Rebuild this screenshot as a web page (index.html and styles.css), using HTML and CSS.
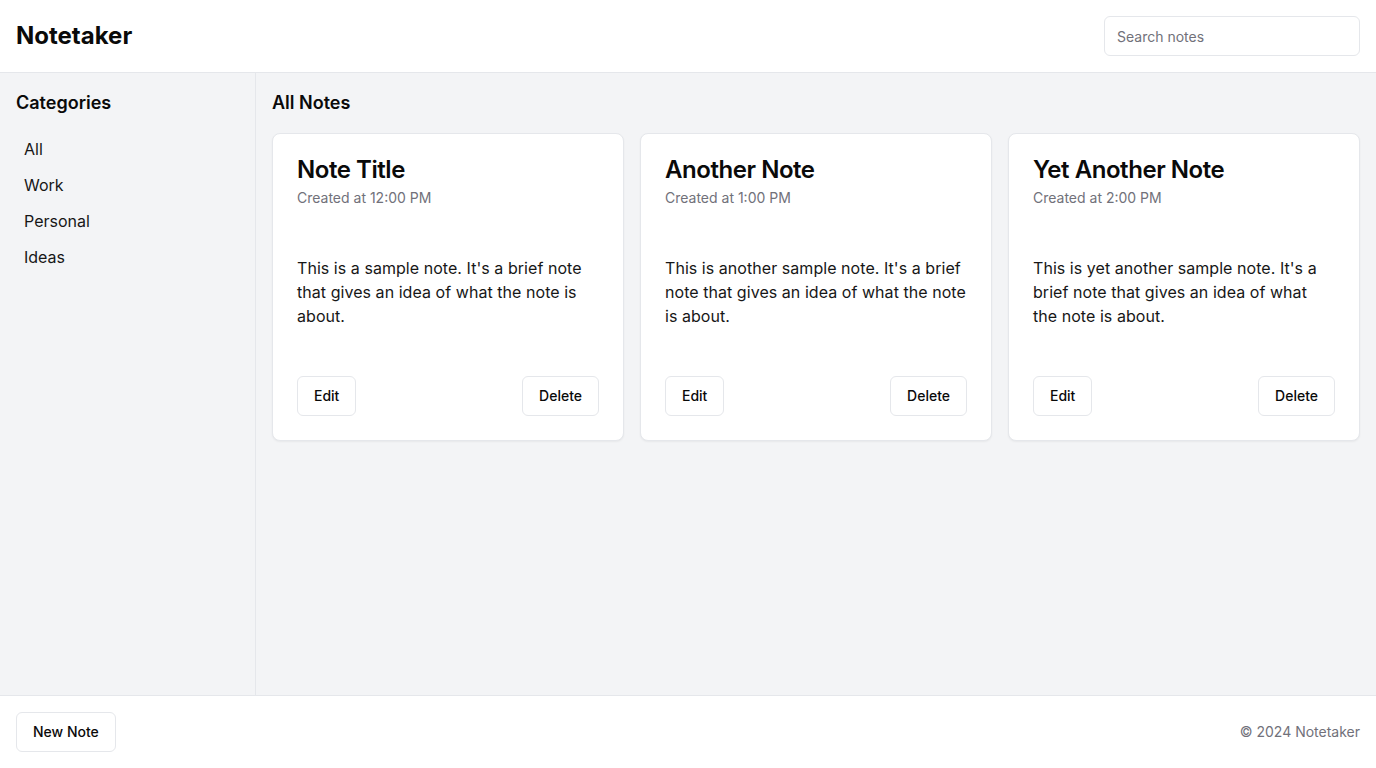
FILE: index.html
```html
<!DOCTYPE html>
<html lang="en">
<head>
<meta charset="utf-8">
<title>Notetaker</title>
<link rel="stylesheet" href="styles.css">
</head>
<body>
<div class="app">
  <header class="topbar">
    <h1 class="brand">Notetaker</h1>
    <input class="search" type="text" placeholder="Search notes">
  </header>
  <div class="middle">
    <aside class="sidebar">
      <h2 class="section-title sidebar-title">Categories</h2>
      <ul class="cat-list">
        <li class="cat-item">All</li>
        <li class="cat-item">Work</li>
        <li class="cat-item">Personal</li>
        <li class="cat-item">Ideas</li>
      </ul>
    </aside>
    <main class="content">
      <h2 class="section-title">All Notes</h2>
      <div class="grid">
        <article class="card">
          <h3 class="card-title">Note Title</h3>
          <p class="card-meta">Created at 12:00 PM</p>
          <p class="card-body">This is a sample note. It's a brief note that gives an idea of what the note is about.</p>
          <div class="card-actions">
            <button class="btn">Edit</button>
            <button class="btn">Delete</button>
          </div>
        </article>
        <article class="card">
          <h3 class="card-title">Another Note</h3>
          <p class="card-meta">Created at 1:00 PM</p>
          <p class="card-body">This is another sample note. It's a brief note that gives an idea of what the note is about.</p>
          <div class="card-actions">
            <button class="btn">Edit</button>
            <button class="btn">Delete</button>
          </div>
        </article>
        <article class="card">
          <h3 class="card-title">Yet Another Note</h3>
          <p class="card-meta">Created at 2:00 PM</p>
          <p class="card-body">This is yet another sample note. It's a brief note that gives an idea of what the note is about.</p>
          <div class="card-actions">
            <button class="btn">Edit</button>
            <button class="btn">Delete</button>
          </div>
        </article>
      </div>
    </main>
  </div>
  <footer class="footer">
    <button class="btn">New Note</button>
    <span class="copyright">© 2024 Notetaker</span>
  </footer>
</div>
</body>
</html>
```
FILE: styles.css
```css
* { box-sizing: border-box; }
html, body { margin: 0; padding: 0; }
body {
  font-family: Inter, "Noto Sans", sans-serif;
  color: #0a0a0a;
  background: #fff;
}
.app {
  height: 100vh;
  display: flex;
  flex-direction: column;
}
.topbar {
  display: flex;
  align-items: center;
  justify-content: space-between;
  padding: 16px;
  border-bottom: 1px solid #e5e7eb;
  background: #fff;
}
.brand {
  margin: 0;
  font-size: 24px;
  line-height: 32px;
  font-weight: 700;
}
.search {
  width: 256px;
  height: 40px;
  border: 1px solid #e5e7eb;
  border-radius: 6px;
  padding: 0 12px;
  font-family: inherit;
  font-size: 14px;
  color: #0a0a0a;
  background: #fff;
  outline: none;
}
.search::placeholder { color: #71717a; }
.middle {
  flex: 1;
  display: flex;
  min-height: 0;
  background: #f3f4f6;
}
.sidebar {
  width: 256px;
  flex-shrink: 0;
  padding: 16px;
  border-right: 1px solid #e5e7eb;
}
.section-title {
  margin: 0 0 16px;
  font-size: 18px;
  line-height: 28px;
  font-weight: 600;
}
.sidebar-title { margin-bottom: 14px; }
.cat-list {
  list-style: none;
  margin: 0;
  padding: 0;
}
.cat-item {
  padding: 8px;
  font-size: 16px;
  line-height: 20px;
  color: #171717;
}
.content {
  flex: 1;
  padding: 16px;
}
.grid {
  display: grid;
  grid-template-columns: repeat(3, 1fr);
  gap: 16px;
}
.card {
  background: #fff;
  border: 1px solid #e5e7eb;
  border-radius: 8px;
  box-shadow: 0 1px 2px rgba(0,0,0,0.05);
  padding: 24px;
}
.card-title {
  margin: 0;
  font-size: 24px;
  line-height: 24px;
  font-weight: 600;
  letter-spacing: -0.45px;
}
.card-meta {
  margin: 6px 0 0;
  font-size: 14px;
  line-height: 20px;
  color: #71717a;
}
.card-body {
  margin: 48px 0 48px;
  font-size: 16px;
  line-height: 24px;
  letter-spacing: 0.05px;
  color: #171717;
}
.card-actions {
  display: flex;
  justify-content: space-between;
  align-items: center;
}
.btn {
  height: 40px;
  padding: 0 16px 1px;
  border: 1px solid #e5e7eb;
  border-radius: 6px;
  background: #fff;
  font-family: inherit;
  font-size: 14px;
  font-weight: 500;
  color: #0a0a0a;
  cursor: pointer;
}
.footer {
  display: flex;
  align-items: center;
  justify-content: space-between;
  padding: 16px;
  border-top: 1px solid #e5e7eb;
  background: #fff;
}
.copyright {
  font-size: 14px;
  line-height: 20px;
  color: #71717a;
}
```
